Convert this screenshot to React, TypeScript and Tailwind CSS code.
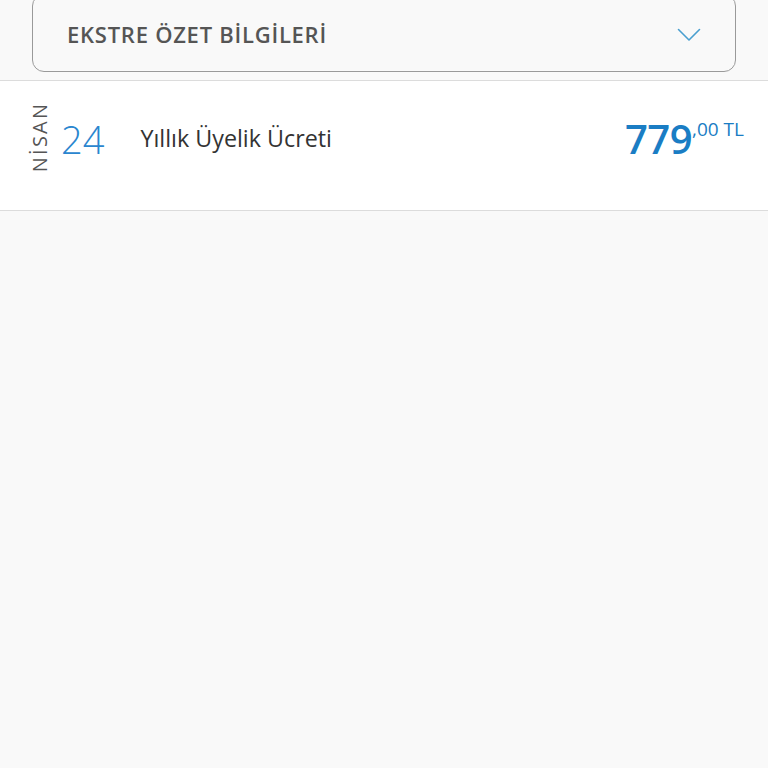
import React from "react";

export default function App() {
  return (
    <div
      className="w-[768px] h-[768px] overflow-hidden bg-[#f9f9f9]"
      style={{ fontFamily: '"Open Sans", "Noto Sans", sans-serif' }}
    >
      <div className="px-[32px] pb-[8px]">
        <div className="-mt-[6px] h-[78px] rounded-[12px] border border-[#9a9a9a] bg-[#f9f9f9] flex items-center justify-between pl-[34px] pr-[34px] pt-[3px]">
          <span className="text-[22px] font-semibold text-[#555555] tracking-[0.75px]">
            EKSTRE ÖZET BİLGİLERİ
          </span>
          <svg width="24" height="14" viewBox="0 0 24 14" fill="none">
            <path d="M1.5 1.5 L12 12 L22.5 1.5" stroke="#4a9fd0" strokeWidth="1.6" strokeLinejoin="round" strokeLinecap="round" />
          </svg>
        </div>
      </div>
      <div className="border-t border-b border-[#dcdcdc] bg-white h-[131px] flex items-center pl-[29px] pr-[24px] pb-[14px]">
        <div className="w-[22px] flex items-center justify-center -mt-[4px]">
          <span className="-rotate-90 inline-block text-[20px] text-[#555555] tracking-[2.2px] whitespace-nowrap leading-none">
            NİSAN
          </span>
        </div>
        <span className="ml-[10px] text-[38px] font-light text-[#2a86cf] leading-none">24</span>
        <span className="ml-[36px] text-[23.3px] text-[#333333] leading-none">Yıllık Üyelik Ücreti</span>
        <div className="ml-auto flex items-start text-[#1a7dc4]">
          <span className="text-[40px] font-semibold leading-none tracking-[-0.5px]">779</span>
          <span className="text-[19px] font-medium leading-none mt-[1px]">,00 TL</span>
        </div>
      </div>
    </div>
  );
}
